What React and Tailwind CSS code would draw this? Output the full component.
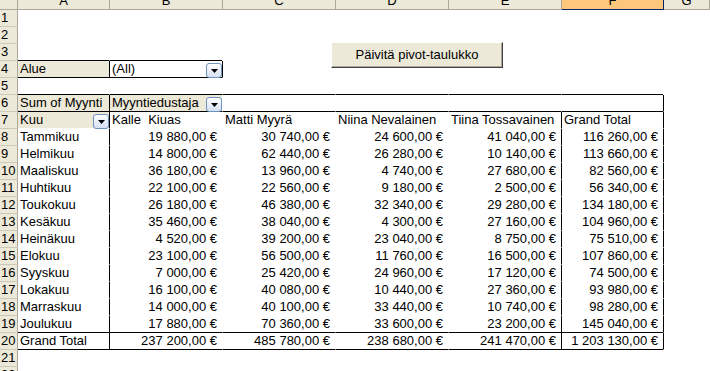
import React from "react";

const letters = ["A", "B", "C", "D", "E", "F", "G"];
const headWidths = ["w-[92px]", "w-[113px]", "w-[113px]", "w-[113px]", "w-[113px]", "w-[102px]", "flex-1"];
const bodyWidths = ["w-[91px]", "w-[113px]", "w-[113px]", "w-[113px]", "w-[113px]", "w-[102px]", "flex-1"];

const months = [
  ["Tammikuu", "19 880,00 €", "30 740,00 €", "24 600,00 €", "41 040,00 €", "116 260,00 €"],
  ["Helmikuu", "14 800,00 €", "62 440,00 €", "26 280,00 €", "10 140,00 €", "113 660,00 €"],
  ["Maaliskuu", "36 180,00 €", "13 960,00 €", "4 740,00 €", "27 680,00 €", "82 560,00 €"],
  ["Huhtikuu", "22 100,00 €", "22 560,00 €", "9 180,00 €", "2 500,00 €", "56 340,00 €"],
  ["Toukokuu", "26 180,00 €", "46 380,00 €", "32 340,00 €", "29 280,00 €", "134 180,00 €"],
  ["Kesäkuu", "35 460,00 €", "38 040,00 €", "4 300,00 €", "27 160,00 €", "104 960,00 €"],
  ["Heinäkuu", "4 520,00 €", "39 200,00 €", "23 040,00 €", "8 750,00 €", "75 510,00 €"],
  ["Elokuu", "23 100,00 €", "56 500,00 €", "11 760,00 €", "16 500,00 €", "107 860,00 €"],
  ["Syyskuu", "7 000,00 €", "25 420,00 €", "24 960,00 €", "17 120,00 €", "74 500,00 €"],
  ["Lokakuu", "16 100,00 €", "40 080,00 €", "10 440,00 €", "27 360,00 €", "93 980,00 €"],
  ["Marraskuu", "14 000,00 €", "40 100,00 €", "33 440,00 €", "10 740,00 €", "98 280,00 €"],
  ["Joulukuu", "17 880,00 €", "70 360,00 €", "33 600,00 €", "23 200,00 €", "145 040,00 €"],
  ["Grand Total", "237 200,00 €", "485 780,00 €", "238 680,00 €", "241 470,00 €", "1 203 130,00 €"],
];

function DropButton() {
  return (
    <div className="mt-[2px] w-[16px] h-[15px] shrink-0 rounded-[3px] border border-[#6f93c0] bg-linear-to-b from-white to-[#d5e0f3] flex items-center justify-center">
      <svg width="7" height="4" viewBox="0 0 7 4">
        <path d="M0 0h7L3.5 4z" fill="#000" />
      </svg>
    </div>
  );
}

// build the sheet cells: text, alignment, background, borders
function cellFor(row, col) {
  const cell = { text: "", right: false, beige: false, drop: false, pre: false };
  if (row === 4 && col === 0) Object.assign(cell, { text: "Alue", beige: true });
  if (row === 4 && col === 1) Object.assign(cell, { text: "(All)", drop: true });
  if (row === 6 && col === 0) Object.assign(cell, { text: "Sum of Myynti", beige: true });
  if (row === 6 && col === 1) Object.assign(cell, { text: "Myyntiedustaja", beige: true, drop: true });
  if (row === 7) {
    const heads = ["Kuu", "Kalle  Kiuas", "Matti Myyrä", "Niina Nevalainen", "Tiina Tossavainen", "Grand Total"];
    if (col < 6) cell.text = heads[col];
    if (col === 0) Object.assign(cell, { beige: true, drop: true });
    if (col === 1) cell.pre = true;
  }
  if (row >= 8 && row <= 20 && col < 6) {
    cell.text = months[row - 8][col];
    cell.right = col > 0;
  }
  const bottom =
    ((row === 3 || row === 4) && col <= 1) ||
    ((row === 5 || row === 6 || row === 19 || row === 20) && col <= 5);
  const left =
    (col === 1 && (row === 4 || (row >= 6 && row <= 20))) ||
    (col === 2 && row === 4) ||
    (col === 5 && row >= 7 && row <= 20) ||
    (col === 6 && row >= 6 && row <= 20);
  cell.bottom = bottom;
  cell.left = left;
  return cell;
}

function Row({ n }) {
  return (
    <div className="flex h-[17px]">
      <div className="w-[18px] shrink-0 bg-[#ece9d8] border-r border-r-[#aca899] border-b border-b-[#cdc9ba] pl-[1px] leading-[16px]">
        {n}
      </div>
      {letters.map((l, col) => {
        const c = cellFor(n, col);
        return (
          <div
            key={l}
            className={[
              bodyWidths[col],
              "shrink-0 h-[17px] border-b leading-[16px] whitespace-nowrap flex",
              col > 0 ? "border-l" : "",
              c.left ? "border-l-black" : "border-l-white",
              c.bottom ? "border-b-black" : "border-b-white",
              c.beige ? "bg-[#ece9d8]" : "bg-white",
              c.right ? "justify-end pr-[5px]" : "justify-between pl-[2px]",
              c.pre ? "whitespace-pre" : "",
            ].join(" ")}
          >
            <span>{c.text}</span>
            {c.drop && <DropButton />}
          </div>
        );
      })}
    </div>
  );
}

export default function App() {
  const rows = Array.from({ length: 22 }, (_, i) => i + 1);
  return (
    <div className="relative w-[710px] h-[371px] overflow-hidden bg-white text-black text-[13px] font-['Liberation_Sans',Arial,sans-serif]">
      <div className="flex h-[10px]">
        <div className="w-[18px] shrink-0 bg-[#ece9d8] border-r border-b border-[#aca899]" />
        {letters.map((l, i) => (
          <div
            key={l}
            className={[
              headWidths[i],
              "shrink-0 h-[10px] overflow-hidden border-b text-center",
              l === "F"
                ? "bg-[#ffc77c] border-r border-r-[#0a246a] border-b-[#0a246a]"
                : "bg-[#ece9d8] border-r border-r-[#aca899] border-b-[#aca899]",
            ].join(" ")}
          >
            <div className="mt-[-8px] leading-[17px]">{l}</div>
          </div>
        ))}
      </div>
      {rows.map((n) => (
        <Row key={n} n={n} />
      ))}
      <button className="absolute left-[331px] top-[42px] w-[172px] h-[26px] bg-[#ece9d8] border-t border-l border-t-white border-l-white border-r border-b border-r-[#404040] border-b-[#404040] shadow-[inset_-1px_-1px_0_#aca899] text-[13px] leading-[16px] font-['Liberation_Sans',Arial,sans-serif]">
        Päivitä pivot-taulukko
      </button>
    </div>
  );
}
